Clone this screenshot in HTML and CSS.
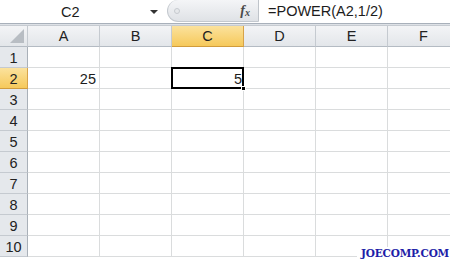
FILE: index.html
```html
<!DOCTYPE html>
<html lang="en">
<head>
    <meta charset="UTF-8">
    <title>POWER</title>
    <link rel="stylesheet" href="styles.css">
</head>
<body>
    <div class="sheet">
        <div class="formula-bar">
            <div class="name-box">
                <span class="name">C2</span>
                <span class="arrow"></span>
            </div>
            <div class="pill">
                <span class="dot"></span>
                <span class="fx">f<sub>x</sub></span>
            </div>
            <div class="formula">=POWER(A2,1/2)</div>
        </div>
        <div class="gap"></div>
        <div class="grid">
            <div class="corner"><span class="tri"></span></div>
            <div class="col-h">A</div>
            <div class="col-h">B</div>
            <div class="col-h active">C</div>
            <div class="col-h">D</div>
            <div class="col-h">E</div>
            <div class="col-h">F</div>

            <div class="row-h">1</div>
            <div class="cell"></div><div class="cell"></div><div class="cell"></div><div class="cell"></div><div class="cell"></div><div class="cell"></div>

            <div class="row-h active">2</div>
            <div class="cell">25</div><div class="cell"></div><div class="cell sel">5<span class="handle"></span></div><div class="cell"></div><div class="cell"></div><div class="cell"></div>

            <div class="row-h">3</div>
            <div class="cell"></div><div class="cell"></div><div class="cell"></div><div class="cell"></div><div class="cell"></div><div class="cell"></div>
            <div class="row-h">4</div>
            <div class="cell"></div><div class="cell"></div><div class="cell"></div><div class="cell"></div><div class="cell"></div><div class="cell"></div>
            <div class="row-h">5</div>
            <div class="cell"></div><div class="cell"></div><div class="cell"></div><div class="cell"></div><div class="cell"></div><div class="cell"></div>
            <div class="row-h">6</div>
            <div class="cell"></div><div class="cell"></div><div class="cell"></div><div class="cell"></div><div class="cell"></div><div class="cell"></div>
            <div class="row-h">7</div>
            <div class="cell"></div><div class="cell"></div><div class="cell"></div><div class="cell"></div><div class="cell"></div><div class="cell"></div>
            <div class="row-h">8</div>
            <div class="cell"></div><div class="cell"></div><div class="cell"></div><div class="cell"></div><div class="cell"></div><div class="cell"></div>
            <div class="row-h">9</div>
            <div class="cell"></div><div class="cell"></div><div class="cell"></div><div class="cell"></div><div class="cell"></div><div class="cell"></div>
            <div class="row-h">10</div>
            <div class="cell"></div><div class="cell"></div><div class="cell"></div><div class="cell"></div><div class="cell"></div><div class="cell"></div>
        </div>
        <div class="watermark">JOECOMP.COM</div>
    </div>
</body>
</html>
```

FILE: styles.css
```css
*{
    box-sizing: border-box;
}
body{
    margin: 0;
    background-color: #fff;
    font-family: "Liberation Sans", Arial, sans-serif;
    color: #1c1c1c;
}
.sheet{
    position: relative;
    width: 450px;
    height: 260px;
    overflow: hidden;
}

/* formula bar */
.formula-bar{
    display: flex;
    height: 24px;
    border-bottom: 1px solid #a8b0ba;
}
.name-box{
    width: 164px;
    display: flex;
    align-items: center;
    padding-left: 61px;
    padding-right: 6px;
    font-size: 14.5px;
}
.name-box .name{
    flex: 1;
}
.arrow{
    width: 0;
    height: 0;
    border-left: 4px solid transparent;
    border-right: 4px solid transparent;
    border-top: 4px solid #333;
}
.pill{
    width: 92px;
    display: flex;
    align-items: center;
    justify-content: space-between;
    margin: 0 0 1px 3px;
    padding: 0 8px 0 6px;
    background: linear-gradient(#f4f5f7, #dfe2e6);
    border: 1px solid #c4c9cf;
    border-top: none;
    border-radius: 12px 0 0 12px;
    border-right-color: #bfc4ca;
}
.dot{
    width: 6px;
    height: 6px;
    border-radius: 50%;
    background-color: #e6e8eb;
    border: 1px solid #c6cacf;
}
.fx{
    font-family: "Liberation Serif", serif;
    font-style: italic;
    font-weight: bold;
    font-size: 14px;
    color: #4a4a4a;
}
.fx sub{
    font-size: 10px;
    vertical-align: -1px;
}
.formula{
    flex: 1;
    padding-left: 9px;
    font-size: 14.5px;
    line-height: 23px;
}
.gap{
    height: 2px;
    background-color: #dde1e6;
    border-bottom: 1px solid #c6cbd1;
}

/* grid */
.grid{
    display: grid;
    grid-template-columns: 28px repeat(6, 72px);
    grid-template-rows: 21px;
    grid-auto-rows: 21px;
    font-size: 14.5px;
}
.corner,
.col-h,
.row-h{
    background: linear-gradient(#f3f4f6, #e3e6ea);
    border-right: 1px solid #c5cad0;
    border-bottom: 1px solid #b4bbc3;
    color: #222;
}
.corner{
    position: relative;
}
.tri{
    position: absolute;
    right: 3px;
    bottom: 3px;
    width: 0;
    height: 0;
    border-left: 14px solid transparent;
    border-bottom: 14px solid #b8bdc3;
}
.col-h{
    text-align: center;
    line-height: 21px;
}
.row-h{
    text-align: center;
    padding-top: 2px;
    line-height: 19px;
    background: #e5e8ec;
    border-bottom-color: #c5cad0;
    border-right-color: #a9b0b8;
}
.col-h.active,
.row-h.active{
    background: linear-gradient(#fbe29d, #f6c95b);
    border-right-color: #d7a34a;
    border-bottom-color: #d19c3c;
}
.cell{
    border-right: 1px solid #dadcdd;
    border-bottom: 1px solid #dadcdd;
    text-align: right;
    padding: 2px 3px 0 0;
    line-height: 19px;
}
.cell.sel{
    position: relative;
    border: 2px solid #000;
    margin: -1px 0 0 -1px;
    padding: 1px 0 0 0;
    line-height: 18px;
}
.handle{
    position: absolute;
    right: -4px;
    bottom: -4px;
    width: 5px;
    height: 5px;
    background-color: #000;
    border: 1px solid #fff;
}

.watermark{
    position: absolute;
    right: 0;
    bottom: 0;
    padding: 0 1px 0 4px;
    background-color: #fff;
    font-family: "DejaVu Serif", serif;
    font-weight: bold;
    font-size: 10.5px;
    line-height: 13px;
    color: #1e1ea8;
    letter-spacing: -0.2px;
}
```
